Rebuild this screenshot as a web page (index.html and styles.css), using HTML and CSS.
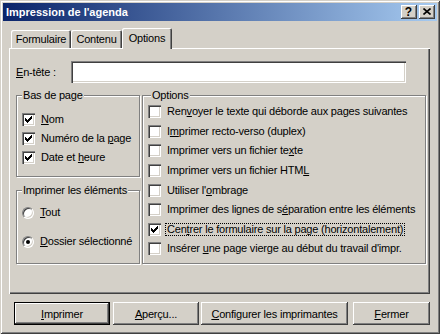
FILE: index.html
```html
<!DOCTYPE html>
<html lang="fr">
<head>
<meta charset="utf-8">
<title>Impression de l'agenda</title>
<link rel="stylesheet" href="styles.css">
</head>
<body>
<div class="window">
  <div class="titlebar">
    <span class="title">Impression de l'agenda</span>
    <span class="tb-btn help">?</span>
    <span class="tb-btn close"><svg width="8" height="7" viewBox="0 0 8 7"><path d="M0.5 0.5 L7.5 6.5 M7.5 0.5 L0.5 6.5" stroke="#000" stroke-width="1.6" fill="none"/></svg></span>
  </div>

  <div class="tabs">
    <div class="tab tab-form">Formulaire</div>
    <div class="tab tab-cont">Contenu</div>
    <div class="tab tab-opt active">Options</div>
  </div>

  <div class="panel">
    <div class="header-row">
      <label class="header-label"><u>E</u>n-tête :</label>
      <div class="field"></div>
    </div>

    <div class="groups">
      <div class="col-left">
        <div class="group group-footer">
          <span class="legend">Bas de page</span>
          <div class="row"><span class="cb"><svg class="check" width="13" height="13" viewBox="0 0 13 13"><g fill="#000"><rect x="3" y="5" width="1" height="3"/><rect x="4" y="6" width="1" height="3"/><rect x="5" y="7" width="1" height="3"/><rect x="6" y="6" width="1" height="3"/><rect x="7" y="5" width="1" height="3"/><rect x="8" y="4" width="1" height="3"/><rect x="9" y="3" width="1" height="3"/></g></svg></span><span class="lbl"><u>N</u>om</span></div>
          <div class="row"><span class="cb"><svg class="check" width="13" height="13" viewBox="0 0 13 13"><g fill="#000"><rect x="3" y="5" width="1" height="3"/><rect x="4" y="6" width="1" height="3"/><rect x="5" y="7" width="1" height="3"/><rect x="6" y="6" width="1" height="3"/><rect x="7" y="5" width="1" height="3"/><rect x="8" y="4" width="1" height="3"/><rect x="9" y="3" width="1" height="3"/></g></svg></span><span class="lbl">Numéro de la <u>p</u>age</span></div>
          <div class="row"><span class="cb"><svg class="check" width="13" height="13" viewBox="0 0 13 13"><g fill="#000"><rect x="3" y="5" width="1" height="3"/><rect x="4" y="6" width="1" height="3"/><rect x="5" y="7" width="1" height="3"/><rect x="6" y="6" width="1" height="3"/><rect x="7" y="5" width="1" height="3"/><rect x="8" y="4" width="1" height="3"/><rect x="9" y="3" width="1" height="3"/></g></svg></span><span class="lbl">Date et <u>h</u>eure</span></div>
        </div>

        <div class="group group-items">
          <span class="legend">Imprimer les éléments</span>
          <div class="row"><span class="radio"></span><span class="lbl"><u>T</u>out</span></div>
          <div class="row"><span class="radio on"><span class="dot"></span></span><span class="lbl"><u>D</u>ossier sélectionné</span></div>
        </div>
      </div>

      <div class="group group-options">
        <span class="legend legend-opt">Options</span>
        <div class="row"><span class="cb"></span><span class="lbl">Ren<u>v</u>oyer le texte qui déborde aux pages suivantes</span></div>
        <div class="row"><span class="cb"></span><span class="lbl">I<u>m</u>primer recto-verso (duplex)</span></div>
        <div class="row"><span class="cb"></span><span class="lbl">Imprimer vers un fichier te<u>x</u>te</span></div>
        <div class="row"><span class="cb"></span><span class="lbl">Imprimer vers un fichier HTM<u>L</u></span></div>
        <div class="row"><span class="cb"></span><span class="lbl">Utiliser l'<u>o</u>mbrage</span></div>
        <div class="row"><span class="cb"></span><span class="lbl">Imprimer des lignes de s<u>é</u>paration entre les éléments</span></div>
        <div class="row"><span class="cb"><svg class="check" width="13" height="13" viewBox="0 0 13 13"><g fill="#000"><rect x="3" y="5" width="1" height="3"/><rect x="4" y="6" width="1" height="3"/><rect x="5" y="7" width="1" height="3"/><rect x="6" y="6" width="1" height="3"/><rect x="7" y="5" width="1" height="3"/><rect x="8" y="4" width="1" height="3"/><rect x="9" y="3" width="1" height="3"/></g></svg></span><span class="lbl focus">Cen<u>t</u>rer le formulaire sur la page (horizontalement)</span></div>
        <div class="row"><span class="cb"></span><span class="lbl">Insérer <u>u</u>ne page vierge au début du travail d'impr.</span></div>
      </div>
    </div>
  </div>

  <div class="buttons">
    <div class="btn default btn-print"><span><u>I</u>mprimer</span></div>
    <div class="btn btn-preview"><span><u>A</u>perçu...</span></div>
    <div class="btn btn-config"><span><u>C</u>onfigurer les imprimantes</span></div>
    <div class="btn btn-close"><span><u>F</u>ermer</span></div>
  </div>
</div>
</body>
</html>
```

FILE: styles.css
```css
html, body {
  margin: 0;
  padding: 0;
  background: #d4d0c8;
}

body {
  font-family: "Liberation Sans", Arial, sans-serif;
  font-size: 11px;
  letter-spacing: -0.2px;
  color: #000;
}

u {
  text-decoration: underline;
  text-underline-offset: 1px;
}

.window {
  width: 440px;
  height: 334px;
  box-sizing: border-box;
  padding: 3px;
  display: flex;
  flex-direction: column;
  background: #d4d0c8;
  box-shadow: inset 1px 1px 0 #d4d0c8, inset -1px -1px 0 #404040,
              inset 2px 2px 0 #ffffff, inset -2px -2px 0 #808080;
}

/* Title bar */
.titlebar {
  height: 18px;
  flex: none;
  display: flex;
  align-items: center;
  padding: 0 2px 0 3px;
  background: linear-gradient(to right, #0a246a, #a6caf0);
  color: #fff;
  font-weight: bold;
  letter-spacing: 0;
}

.title {
  flex: 1;
  line-height: 18px;
}

.tb-btn {
  width: 16px;
  height: 14px;
  box-sizing: border-box;
  background: #d4d0c8;
  display: flex;
  align-items: center;
  justify-content: center;
  color: #000;
  box-shadow: inset -1px -1px 0 #404040, inset 1px 1px 0 #ffffff,
              inset -2px -2px 0 #808080;
}

.tb-btn.help {
  margin-right: 2px;
  font-size: 12px;
  font-weight: bold;
  padding-bottom: 1px;
  padding-right: 1px;
}

.tb-btn.close svg {
  display: block;
  margin-right: 1px;
  margin-bottom: 1px;
}

/* Tabs */
.tabs {
  flex: none;
  height: 20px;
  margin-top: 7px;
  padding-left: 8px;
  display: flex;
  align-items: flex-end;
}

.tab {
  height: 18px;
  box-sizing: border-box;
  padding-top: 3px;
  text-align: center;
  line-height: 13px;
  background: #d4d0c8;
  border-top-left-radius: 2px;
  border-top-right-radius: 2px;
  box-shadow: inset 1px 1px 0 #ffffff, inset -1px 0 0 #404040,
              inset -2px 0 0 #808080;
}

.tab-form { width: 60px; }
.tab-cont { width: 51px; }
.tab-opt { width: 50px; }

.tab.active {
  height: 21px;
  margin-bottom: -1px;
  margin-right: -2px;
  padding-top: 4px;
  position: relative;
  z-index: 1;
}

/* Panel */
.panel {
  flex: none;
  width: 421px;
  height: 246px;
  box-sizing: border-box;
  margin-left: 6px;
  padding: 13px 0 0 7px;
  box-shadow: inset 1px 1px 0 #ffffff, inset -1px -1px 0 #404040,
              inset -2px -2px 0 #808080;
}

.header-row {
  height: 22px;
  display: flex;
  align-items: center;
}

.header-label {
  width: 55px;
  flex: none;
}

.field {
  width: 335px;
  height: 22px;
  background: #fff;
  box-shadow: inset 1px 1px 0 #808080, inset 2px 2px 0 #404040,
              inset -1px -1px 0 #ffffff, inset -2px -2px 0 #d4d0c8;
}

.groups {
  margin-top: 12px;
  display: flex;
  gap: 2px;
}

.col-left {
  width: 124px;
  display: flex;
  flex-direction: column;
}

.group {
  position: relative;
  box-sizing: border-box;
  border: 1px solid #808080;
  box-shadow: inset 1px 1px 0 #ffffff, 1px 1px 0 #ffffff;
  padding-left: 5px;
  display: flex;
  flex-direction: column;
}

.legend {
  position: absolute;
  top: -7px;
  left: 5px;
  padding: 0 1px;
  line-height: 13px;
  background: #d4d0c8;
  white-space: nowrap;
}

.legend-opt {
  left: 8px;
}

.group-footer {
  height: 82px;
  padding-top: 14px;
}

.group-items {
  height: 74px;
  margin-top: 13px;
  padding-top: 12px;
  gap: 10px;
}

.group-options {
  width: 284px;
  height: 169px;
  padding-top: 6px;
}

.row {
  height: 19px;
  display: flex;
  align-items: center;
  white-space: nowrap;
}

.group-options .row {
  height: 19.6px;
}

.cb {
  width: 13px;
  height: 13px;
  flex: none;
  margin-right: 6px;
  background: #fff;
  box-shadow: inset 1px 1px 0 #808080, inset 2px 2px 0 #404040,
              inset -1px -1px 0 #ffffff, inset -2px -2px 0 #d4d0c8;
}

.check {
  display: block;
}

.radio {
  width: 12px;
  height: 12px;
  flex: none;
  box-sizing: border-box;
  margin-right: 6px;
  border-radius: 50%;
  background: #fff;
  border: 1px solid;
  border-color: #808080 #ffffff #ffffff #808080;
  box-shadow: inset 1px 1px 0 #404040, inset -1px -1px 0 #d4d0c8;
  display: flex;
  align-items: center;
  justify-content: center;
}

.dot {
  width: 4px;
  height: 4px;
  border-radius: 50%;
  background: #000;
}

.lbl {
  line-height: 13px;
}

.lbl.focus {
  border: 1px dotted #000;
  padding: 0 1px 1px;
  margin-left: -2px;
  line-height: 10px;
}

/* Buttons */
.buttons {
  flex: none;
  margin-top: 8px;
  padding-left: 11px;
  display: flex;
}

.btn {
  height: 23px;
  box-sizing: border-box;
  display: flex;
  align-items: center;
  justify-content: center;
  background: #d4d0c8;
  box-shadow: inset -1px -1px 0 #404040, inset 1px 1px 0 #ffffff,
              inset -2px -2px 0 #808080;
}

.btn.default {
  border: 1px solid #000;
}

.btn-print { width: 96px; }
.btn-preview { width: 86px; margin-left: 3px; }
.btn-config { width: 147px; margin-left: 2px; }
.btn-close { width: 77px; margin-left: 5px; }
```
